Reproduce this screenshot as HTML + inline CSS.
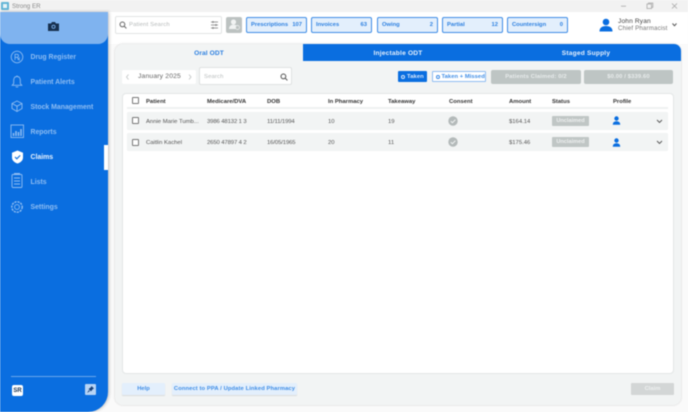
<!DOCTYPE html>
<html><head><meta charset="utf-8">
<style>
*{box-sizing:border-box;margin:0;padding:0}
html,body{width:688px;height:412px;overflow:hidden;background:#fafafa;font-family:"Liberation Sans",sans-serif}
.a{position:absolute}
.t{position:absolute;white-space:nowrap;line-height:10px;height:10px}
#root{position:relative;width:688px;height:412px;filter:blur(.4px);overflow:hidden}
.nav{color:#8fbdf2;font-size:6.9px;font-weight:bold}
.stat{position:absolute;top:17px;width:61px;height:16px;background:#e3effc;border:1px solid #3f8de6;border-radius:2px;color:#2b7fe0;font-size:5.8px;font-weight:bold;line-height:15px;padding:0 4px;display:flex;justify-content:space-between}
.hd{color:#333;font-size:5.9px;font-weight:bold;margin-top:.5px}
.cell{color:#555;font-size:5.9px;margin-top:.5px}
.row{position:absolute;left:127px;width:541px;height:18px;background:#f2f4f4;border-radius:1px}
.cb{position:absolute;width:7px;height:7px;border:1px solid #777;border-radius:1px;background:#fff}
.badge{position:absolute;left:552px;width:37px;height:10px;background:#c0c6c5;border-radius:1px;color:#eef0f0;font-size:5.6px;font-weight:bold;text-align:center;line-height:10px}
.grey{position:absolute;top:70px;height:14px;background:#bec5c4;border-radius:2px;color:#e8ecec;font-size:5.8px;font-weight:bold;text-align:center;line-height:14px;letter-spacing:.15px}
.tabt{color:#e6f0fc;font-size:6.6px;font-weight:bold;letter-spacing:.2px;margin-top:.5px}
</style></head>
<body><div id="root">

<!-- title bar -->
<div class="a" style="left:0;top:0;width:688px;height:12px;background:#f2f2f2"></div>
<div class="a" style="left:1px;top:2px;width:8px;height:8px;background:#62b5d6;border-radius:1px"></div>
<div class="a" style="left:3px;top:4px;width:4px;height:4px;background:#e8f4f8"></div>
<div class="t" style="left:12px;top:2px;font-size:6.2px;color:#888">Strong ER</div>
<svg class="a" style="left:620px;top:0" width="68" height="12" fill="none" stroke="#a8a8a8" stroke-width=".8">
<path d="M1 6.2h5"/><rect x="27" y="4" width="4.5" height="4.5"/><path d="M28.5 4V3h4.3v4.3h-1.3"/><path d="M52 3.5l5 5M57 3.5l-5 5"/>
</svg>

<!-- header -->
<div class="a" style="left:108px;top:12px;width:580px;height:32px;background:#fff"></div>
<div class="a" style="left:115px;top:16px;width:107px;height:18px;background:#fff;border:1px solid #e2e4e4;border-radius:2px"></div>
<svg class="a" style="left:119px;top:21px" width="8" height="8" fill="none" stroke="#666" stroke-width="1"><circle cx="3.4" cy="3.4" r="2.4"/><path d="M5.2 5.2l2.2 2.2"/></svg>
<div class="t" style="left:129px;top:20px;font-size:5.9px;color:#b4b8b8;letter-spacing:.15px">Patient Search</div>
<svg class="a" style="left:210px;top:20px" width="9" height="10" fill="none" stroke="#777" stroke-width=".8"><path d="M1 2h7M1 5h7M1 8h7"/><path d="M3 1v2M6 4v2M3 7v2"/></svg>
<div class="a" style="left:226px;top:17px;width:16px;height:16px;background:#bcc2c1;border-radius:2px"></div>
<svg class="a" style="left:226px;top:17px" width="16" height="16" fill="#f1f3f3"><circle cx="7.5" cy="5" r="2.6"/><path d="M3 12c0-3 2-4.400 4.500-4.400S12 9 12 12z"/><circle cx="11.500" cy="10.500" r="2" fill="#bcc2c1" stroke="#f1f3f3" stroke-width=".7"/></svg>

<div class="stat" style="left:246px"><span>Prescriptions</span><span>107</span></div>
<div class="stat" style="left:311px"><span>Invoices</span><span>63</span></div>
<div class="stat" style="left:377px"><span>Owing</span><span>2</span></div>
<div class="stat" style="left:442px"><span>Partial</span><span>12</span></div>
<div class="stat" style="left:507px"><span>Countersign</span><span>0</span></div>

<svg class="a" style="left:599px;top:18px" width="14" height="14" fill="#0a6ee0"><circle cx="7" cy="4" r="3.300"/><path d="M.5 13.500c0-3.800 2.500-5.500 6.500-5.500s6.500 1.700 6.500 5.500z"/></svg>
<div class="t" style="left:618px;top:17px;font-size:6.6px;color:#444;letter-spacing:.15px">John Ryan</div>
<div class="t" style="left:618px;top:23.5px;font-size:6.2px;color:#777;letter-spacing:.15px">Chief Pharmacist</div>
<svg class="a" style="left:671px;top:22px" width="7" height="6" fill="none" stroke="#555" stroke-width="1"><path d="M1.500 1.500L3.500 3.800 5.500 1.500"/></svg>

<!-- sidebar -->
<div class="a" style="left:0;top:12px;width:108px;height:400px;background:#0a6ee0;border-bottom-right-radius:20px;box-shadow:1px 0 3px rgba(0,0,0,.25)"></div>
<div class="a" style="left:0;top:12px;width:108px;height:32px;background:#7fb3ef;border-radius:0 0 10px 10px"></div>
<svg class="a" style="left:48px;top:21px" width="11" height="10"><path d="M0 2.500h3l1-1.500h3l1 1.500h3V10H0z" fill="#17304f"/><circle cx="5.500" cy="5.800" r="2" fill="#7fb3ef"/><circle cx="5.500" cy="5.800" r="1.200" fill="#17304f"/></svg>

<svg class="a" style="left:9px;top:48px" width="18" height="180" fill="none" stroke="#8fbdf2" stroke-width=".9">
<circle cx="8" cy="9" r="5.800"/><path d="M6 12V6.300h2a1.500 1.500 0 010 3H6M8 9.300l2.800 3M10.800 9.500l-2 2.500" stroke-width=".8"/>
<path d="M8 28.500c-2.400 0-3.300 2-3.300 4v3l-1.500 1.800h9.600l-1.500-1.800v-3c0-2-.9-4-3.300-4zM6.800 38.500c.3.800 2.100.8 2.400 0M8 27.500v1"/>
<path d="M8 53l5 2.500v5L8 63.500l-5-3v-5zM3 55.500l5 2.700 5-2.700M8 58.200v5"/>
<rect x="2" y="77" width="12.500" height="12.500"/><path d="M4.500 88v-3M7 88v-5M9.500 88v-4M12 88v-7" stroke-width="1.500"/>
<rect x="3" y="126.500" width="10" height="13" rx="1"/><path d="M5 125.500h6M5 130h6M5 133h6M5 136h6"/>
<circle cx="8" cy="159" r="2.400"/><circle cx="8" cy="159" r="5.200" stroke-width="1.400" stroke-dasharray="2.200 .9"/>
</svg>
<svg class="a" style="left:11px;top:150px" width="13" height="14"><path d="M6.500 .5l5.500 2.300v4.700c0 3-2.500 5-5.500 6-3-1-5.500-3-5.500-6V2.800z" fill="#fff"/><path d="M4 7l1.800 1.800L9.200 5.400" fill="none" stroke="#0a6ee0" stroke-width="1.100"/></svg>

<div class="t nav" style="left:30.5px;top:52.5px">Drug Register</div>
<div class="t nav" style="left:30.5px;top:77.5px">Patient Alerts</div>
<div class="t nav" style="left:30.5px;top:102.5px">Stock Management</div>
<div class="t nav" style="left:30.5px;top:127.5px">Reports</div>
<div class="t nav" style="left:30.5px;top:152.5px;color:#eaf3fd">Claims</div>
<div class="t nav" style="left:30.5px;top:177.5px">Lists</div>
<div class="t nav" style="left:30.5px;top:202.5px">Settings</div>
<div class="a" style="left:104px;top:145px;width:3.5px;height:25px;background:#fff"></div>

<div class="a" style="left:11px;top:376px;width:85px;height:1px;background:#6aa6ec"></div>
<div class="a" style="left:12px;top:385px;width:11px;height:11px;background:#fff;border-radius:2px"></div>
<div class="t" style="left:12px;top:386px;width:11px;text-align:center;font-size:6px;font-weight:bold;color:#17304f">SR</div>
<div class="a" style="left:85px;top:384px;width:11px;height:11px;background:#b7d4f5;border-radius:1px"></div>
<svg class="a" style="left:85px;top:384px" width="11" height="11" fill="#17407a"><path d="M6.500 2l2.500 2.500-1.200.6-1.800 2.300-2.400-2.400 2.300-1.800zM3.900 6.100l1 1L2 9z"/></svg>

<!-- main panel -->
<div class="a" style="left:115px;top:44px;width:566px;height:361px;background:#f2f4f4;border-radius:8px;box-shadow:0 0 2px rgba(0,0,0,.18)"></div>
<div class="a" style="left:303px;top:44px;width:378px;height:17px;background:#0a6ee0;border-radius:0 7px 0 0"></div>
<div class="t" style="left:115px;top:48.5px;width:188px;text-align:center;color:#2b7fe0;font-size:6.6px;font-weight:bold;letter-spacing:.1px">Oral ODT</div>
<div class="t tabt" style="left:303px;top:48px;width:190px;text-align:center">Injectable ODT</div>
<div class="t tabt" style="left:491px;top:48px;width:190px;text-align:center">Staged Supply</div>

<!-- controls -->
<div class="a" style="left:122px;top:70px;width:74px;height:14px;background:#fff;border-radius:2px"></div>
<svg class="a" style="left:124px;top:73px" width="70" height="8" fill="none" stroke="#c4c8c8" stroke-width=".9"><path d="M4.500 1.500L2.500 4l2 2.500M65 1.500L67 4l-2 2.500"/></svg>
<div class="t" style="left:138px;top:72px;font-size:6.8px;color:#666;letter-spacing:.15px">January 2025</div>
<div class="a" style="left:199px;top:67px;width:93px;height:18px;background:#fff;border:1px solid #dfe2e2;border-radius:2px"></div>
<div class="t" style="left:204px;top:72px;font-size:5.9px;color:#b8bcbc;letter-spacing:.15px">Search</div>
<svg class="a" style="left:280px;top:72.5px" width="8" height="8" fill="none" stroke="#555" stroke-width="1"><circle cx="3.400" cy="3.400" r="2.400"/><path d="M5.200 5.200l2.200 2.200"/></svg>

<div class="a" style="left:398px;top:71px;width:29px;height:11px;background:#0a6ee0;border-radius:1px"></div>
<div class="a" style="left:401px;top:74.5px;width:4px;height:4px;border:.8px solid #d5e6fa;border-radius:50%"></div>
<div class="t" style="left:407px;top:71.5px;font-size:5.8px;font-weight:bold;color:#dbe9fb;letter-spacing:.1px">Taken</div>
<div class="a" style="left:432px;top:71px;width:54px;height:11px;background:#fff;border:1px solid #8fbdf2;border-radius:1px"></div>
<div class="a" style="left:435.5px;top:74.5px;width:4px;height:4px;border:.8px solid #3f8de6;border-radius:50%"></div>
<div class="t" style="left:441.5px;top:71.5px;font-size:5.8px;font-weight:bold;color:#3f8de6;letter-spacing:.05px">Taken + Missed</div>
<div class="grey" style="left:491px;width:90px">Patients Claimed: 0/2</div>
<div class="grey" style="left:584px;width:89px">$0.00 / $339.60</div>

<!-- table -->
<div class="a" style="left:122px;top:93px;width:552px;height:281px;background:#fff;border:1px solid #e3e6e6;border-radius:4px"></div>
<div class="a" style="left:127px;top:107px;width:541px;height:1.5px;background:#eff1f1"></div>
<div class="cb" style="left:132px;top:97px"></div>
<div class="t hd" style="left:146px;top:96px">Patient</div>
<div class="t hd" style="left:207px;top:96px">Medicare/DVA</div>
<div class="t hd" style="left:267px;top:96px">DOB</div>
<div class="t hd" style="left:328px;top:96px">In Pharmacy</div>
<div class="t hd" style="left:388px;top:96px">Takeaway</div>
<div class="t hd" style="left:449px;top:96px">Consent</div>
<div class="t hd" style="left:509px;top:96px">Amount</div>
<div class="t hd" style="left:552px;top:96px">Status</div>
<div class="t hd" style="left:613px;top:96px">Profile</div>

<div class="row" style="top:112px"></div>
<div class="cb" style="left:132px;top:117px"></div>
<div class="t cell" style="left:146px;top:116px">Annie Marie Tumb...</div>
<div class="t cell" style="left:207px;top:116px;letter-spacing:-.1px">3986 48132 1 3</div>
<div class="t cell" style="left:267px;top:116px;letter-spacing:-.1px">11/11/1994</div>
<div class="t cell" style="left:328px;top:116px">10</div>
<div class="t cell" style="left:388px;top:116px">19</div>
<svg class="a" style="left:448px;top:116px" width="10" height="10"><circle cx="5" cy="5" r="4.700" fill="#b4baba"/><path d="M2.800 5.200l1.600 1.500 3-3" fill="none" stroke="#f2f4f4" stroke-width="1"/></svg>
<div class="t cell" style="left:509px;top:116px">$164.14</div>
<div class="badge" style="top:116px">Unclaimed</div>
<svg class="a" style="left:612px;top:116px" width="9" height="9" fill="#0a6ee0"><circle cx="4.500" cy="2.500" r="2.200"/><path d="M.8 8.800c0-2.500 1.500-3.500 3.700-3.500s3.700 1 3.700 3.500z"/></svg>
<svg class="a" style="left:656px;top:119px" width="7" height="5" fill="none" stroke="#555" stroke-width=".9"><path d="M1 1l2.500 2.500L6 1"/></svg>

<div class="row" style="top:133px"></div>
<div class="cb" style="left:132px;top:139px"></div>
<div class="t cell" style="left:146px;top:137px">Caitlin Kachel</div>
<div class="t cell" style="left:207px;top:137px;letter-spacing:-.1px">2650 47897 4 2</div>
<div class="t cell" style="left:267px;top:137px;letter-spacing:-.1px">16/05/1965</div>
<div class="t cell" style="left:328px;top:137px">20</div>
<div class="t cell" style="left:388px;top:137px">11</div>
<svg class="a" style="left:448px;top:137px" width="10" height="10"><circle cx="5" cy="5" r="4.700" fill="#b4baba"/><path d="M2.800 5.200l1.600 1.500 3-3" fill="none" stroke="#f2f4f4" stroke-width="1"/></svg>
<div class="t cell" style="left:509px;top:137px">$175.46</div>
<div class="badge" style="top:137px">Unclaimed</div>
<svg class="a" style="left:612px;top:138px" width="9" height="9" fill="#0a6ee0"><circle cx="4.500" cy="2.500" r="2.200"/><path d="M.8 8.800c0-2.500 1.500-3.500 3.700-3.500s3.700 1 3.700 3.500z"/></svg>
<svg class="a" style="left:656px;top:140px" width="7" height="5" fill="none" stroke="#555" stroke-width=".9"><path d="M1 1l2.500 2.500L6 1"/></svg>

<!-- footer -->
<div class="a" style="left:122px;top:383px;width:43px;height:12px;background:#e3effc;border-radius:1px;box-shadow:0 1px 1px rgba(0,0,0,.1);color:#3f8de6;font-size:5.8px;font-weight:bold;text-align:center;line-height:13px">Help</div>
<div class="a" style="left:172px;top:383px;width:125px;height:12px;background:#e3effc;border-radius:1px;box-shadow:0 1px 1px rgba(0,0,0,.1);color:#3f8de6;font-size:5.8px;font-weight:bold;text-align:center;line-height:13px;letter-spacing:.1px;white-space:nowrap">Connect to PPA / Update Linked Pharmacy</div>
<div class="a" style="left:631px;top:383px;width:43px;height:12px;background:#d3d6d6;border-radius:1px;color:#eef0f0;font-size:5.8px;font-weight:bold;text-align:center;line-height:13px">Claim</div>

</div></body></html>
